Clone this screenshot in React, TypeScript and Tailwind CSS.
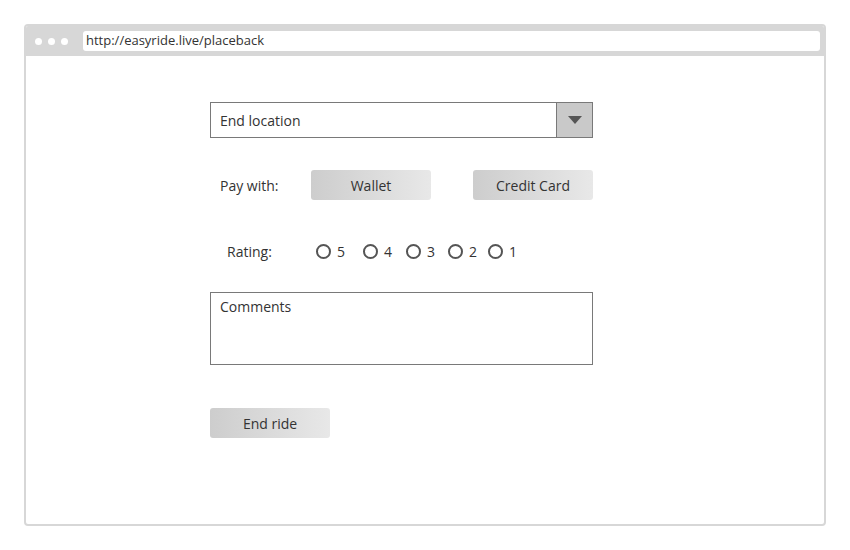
const ratings = ["5", "4", "3", "2", "1"];
const gaps = ["", "ml-[18px]", "ml-[14px]", "ml-[13px]", "ml-[11px]"];

function GrayButton({ label, className = "" }: { label: string; className?: string }) {
  return (
    <button
      className={`flex h-[30px] w-[120px] items-center justify-center rounded-[3px] bg-gradient-to-r from-[#cdcdcd] to-[#e8e8e8] text-[14px] text-[#333] ${className}`}
    >
      {label}
    </button>
  );
}

export default function App() {
  return (
    <div
      className="h-[550px] w-[850px] bg-white pl-[24px] pt-[24px]"
      style={{ fontFamily: '"Open Sans", "Noto Sans", sans-serif' }}
    >
      {/* Browser frame */}
      <div className="h-[502px] w-[802px] overflow-hidden rounded-[4px] border-2 border-[#d7d7d7]">
        <div className="flex h-[30px] items-center bg-[#d7d7d7] pl-[9px] pr-[4px]">
          <div className="flex gap-[6px]">
            <span className="h-[7px] w-[7px] rounded-full bg-white" />
            <span className="h-[7px] w-[7px] rounded-full bg-white" />
            <span className="h-[7px] w-[7px] rounded-full bg-white" />
          </div>
          <div className="ml-[15px] flex h-[20px] flex-1 items-center rounded-[3px] bg-white pl-[3px] text-[13px] text-[#333]">
            http://easyride.live/placeback
          </div>
        </div>

        {/* Form */}
        <div className="flex flex-col pl-[184px] pt-[46px] text-[14px] text-[#333]">
          <div className="flex h-[36px] w-[383px] border border-[#797979]">
            <div className="flex flex-1 items-center pl-[9px]">End location</div>
            <div className="flex w-[36px] items-center justify-center border-l border-[#797979] bg-[#c9c9c9]">
              <svg width="14" height="8" viewBox="0 0 14 8">
                <path d="M0 0 L14 0 L7 8 Z" fill="#555" />
              </svg>
            </div>
          </div>

          <div className="mt-[32px] flex h-[30px] items-center">
            <span className="ml-[10px] w-[91px]">Pay with:</span>
            <GrayButton label="Wallet" />
            <GrayButton label="Credit Card" className="ml-[42px]" />
          </div>

          <div className="mt-[36px] flex h-[30px] items-center">
            <span className="ml-[17px] w-[89px]">Rating:</span>
            <div className="flex items-center">
              {ratings.map((r, i) => (
                <label key={r} className={`flex items-center gap-[6px] ${gaps[i]}`}>
                  <span className="h-[15px] w-[15px] rounded-full border-2 border-[#555]" />
                  <span>{r}</span>
                </label>
              ))}
            </div>
          </div>

          <div className="mt-[26px] h-[73px] w-[383px] border border-[#797979] pl-[9px] pt-[3px]">
            Comments
          </div>

          <GrayButton label="End ride" className="mt-[43px]" />
        </div>
      </div>
    </div>
  );
}
